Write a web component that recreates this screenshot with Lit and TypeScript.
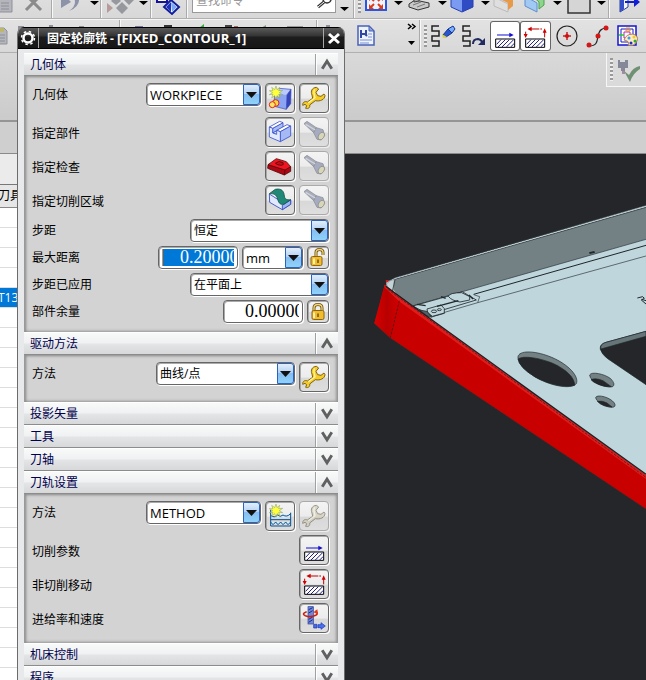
import { LitElement, html, svg, css, nothing, TemplateResult, SVGTemplateResult } from "lit";
import { customElement, state } from "lit/decorators.js";
import { classMap } from "lit/directives/class-map.js";

type Art = SVGTemplateResult;

/* ---------- artwork shared by dialog buttons (90-unit grid) ---------- */

const star = svg`<path d="M33 9l3 11 8-7-3 10 12-1-10 7 10 6-12-1 4 11-9-7-3 11-4-11-9 7 4-11-11 1 10-6-10-6 11 0-4-10 9 7z" fill="#ffff3c" stroke="#7d9a68" stroke-width="1.5"/>`;

const wrench = svg`<path d="M52 13C39 14 34 25 39 36L41 46 25 57C17 53 10 59 11 67L18 64 23 68 20 76C28 79 34 73 32 66L49 53C63 56 77 50 78 38L75 33 66 40 56 38 51 28 59 18Z" fill="#f8cc28" stroke="#7b6414" stroke-width="3"/><path d="M47 19C42 26 46 36 48 44L28 59" fill="none" stroke="#fff6a0" stroke-width="4"/>`;

const hatch = svg`<path d="M17 51H74V76H17Z" fill="#fff" stroke="#000" stroke-width="3"/><path d="M20 67L33 53M24 75L46 53M36 75L58 53M49 75L71 53M62 75L73 64" stroke="#20208c" stroke-width="3"/>`;
const cutting = svg`${hatch}<path d="M21 39H64" stroke="#1010d0" stroke-width="3"/><path d="M58 32L71 39 58 46Z" fill="#1010d0"/>`;
const nonCutting = svg`${hatch}<path d="M32 21H66M17 29V42M74 46V30" fill="none" stroke="#c00000" stroke-width="3" stroke-dasharray="26 3"/><path d="M35 14V28L22 21ZM11 36H23L17 48ZM68 32H80L74 19Z" fill="#d00000"/>`;

const art: Record<string, Art> = {
  newGeometry: svg`<path d="M28 31L43 16 78 19 66 35Z" fill="#b9cbff"/><path d="M28 31L66 35 64 79 28 70Z" fill="#8ba5f4"/><path d="M66 35L78 19 77 62 64 79Z" fill="#3345b9"/><path d="M28 31L43 16 78 19 77 62 64 79 28 70ZM66 35L64 79M66 35L78 19" fill="none" stroke="#3347bd" stroke-width="2"/><circle cx="32" cy="60" r="10" fill="#ffd83e" stroke="#e02020" stroke-width="3"/><circle cx="22" cy="65" r="9" fill="#ffe766" stroke="#e02020" stroke-width="3"/>${star}`,
  wrench,
  part: svg`<g stroke="#3b50cc" stroke-width="2.5" stroke-linejoin="round"><path d="M23 34L54 17V31L23 48Z" fill="#a9bdf5"/><path d="M23 48L54 31 66 35 35 52Z" fill="#dbe5ff"/><path d="M13 30L44 13 54 17 23 34Z" fill="#fff"/><path d="M35 40L66 23 77 27 46 44Z" fill="#fff"/><path d="M46 44L77 27V57L46 74Z" fill="#a5b9f4"/><path d="M13 30L23 34V48L35 52V40L46 44V74L13 60Z" fill="#e2eaff"/></g>`,
  check: svg`<g stroke="#520808" stroke-width="2.5" stroke-linejoin="round"><path d="M9 41L8 52 58 72 77 61V47L61 56Z" fill="#ae0713"/><path d="M9 41L34 23 64 32 77 47 60 57Z" fill="#f01422"/><path d="M60 57L58 72" /><path d="M31 37Q40 27 54 35Q58 42 49 43Q38 43 31 37Z" fill="#c90c18"/></g>`,
  area: svg`<g stroke="#3046bb" stroke-width="2.5" stroke-linejoin="round"><path d="M13 27L14 52 52 74 77 58V45L56 57 38 43Z" fill="#e0e9ff"/><path d="M52 61L77 45V58L52 74Z" fill="#a0b6f4"/></g><path d="M13 26L31 13C50 9 57 19 58 33C59 44 67 45 77 44L56 58C44 60 40 51 38 42C34 29 27 25 13 26Z" fill="#218777" stroke="#125949" stroke-width="2.5"/>`,
  torch: svg`<g stroke="#83868e" stroke-width="2"><path d="M15 20L24 13 52 32 44 47Z" fill="#a9adbb"/><path d="M44 47L52 32 72 38 77 55 66 69 54 67Z" fill="#a6abc0"/><ellipse cx="67" cy="57" rx="8" ry="12" transform="rotate(28 67 57)" fill="#d9d6b5"/><path d="M20 22L49 39" stroke="#d1d4dd" stroke-width="4"/></g>`,
  water: svg`<path d="M17 27V49Q23 45 29 49T41 49T53 49T65 49T77 49V35Q68 47 60 39Q51 49 44 42Q34 50 17 44Z" fill="#d4ecff"/><path d="M17 27V75H77V35M17 43Q28 52 38 42Q46 50 54 42Q65 50 77 38M17 56H77" fill="none" stroke="#07508c" stroke-width="3"/><path d="M17 63L24 71 32 63 39 71 47 63 54 71 62 63 69 71 77 63" fill="#d5efff" stroke="#07508c" stroke-width="3"/>${star}`,
  cutting,
  nonCutting,
  speed: svg`<rect x="27" y="11" width="16" height="52" fill="#7286d7" stroke="#273e9d" stroke-width="2"/><path d="M29 20L41 14M29 30L41 23M29 58L41 50M29 49L41 42" stroke="#182c82" stroke-width="3"/><path d="M49 25Q60 31 50 37Q35 44 19 38Q6 32 23 26" fill="none" stroke="#c8220f" stroke-width="5"/><path d="M43 28L55 19 57 34Z" fill="#e23a1b"/><path d="M44 64H54V75H44Z" fill="#4b6ae8" stroke="#1634b0" stroke-width="2"/><path d="M57 65H66V59L79 69 66 79V74H57Z" fill="#4a70ef" stroke="#1634b0" stroke-width="2"/>`,
};

const padlock = (open: boolean): Art => svg`
  <path d=${open ? "M9 11V5.500Q9 2.500 12.500 2.500T16 5.500V8" : "M7 11V7Q7 3.500 11 3.500T15 7V11"} fill="none" stroke="#6d541a" stroke-width="3"/>
  <path d=${open ? "M9 11V5.500Q9 2.500 12.500 2.500T16 5.500V8" : "M7 11V7Q7 3.500 11 3.500T15 7V11"} fill="none" stroke="#f5d674" stroke-width="1.300"/>
  <rect x=${open ? 4 : 5} y="9.500" width=${open ? 11 : 12} height="9" rx="1.500" fill="#f1bd2c" stroke="#8a6515"/>
  <path d="M7 11.500V17" stroke="#fff0a5" stroke-width="2"/><path d="M11 12.500V16" stroke="#6d541a" stroke-width="1.500"/>`;

/* ---------- toolbar data: each entry is its drawn width and its art ---------- */

interface Tool { w: number; label?: string; art?: Art; sep?: boolean; grip?: boolean; framed?: boolean; }

const drop: Art = svg`<path d="M2 1H11L6.500 5Z" fill="#000"/>`;

const topLeft: Tool[] = [
  { w: 21, label: "粘贴", art: svg`<path d="M-2-6H8L12-1V12H-2Z" fill="#b5b6bc" stroke="#8f9199"/><path d="M1 3H9M1 6H9M1 9H9" stroke="#8b8d98"/>` },
  { w: 30, label: "删除", art: svg`<path d="M6-4L20 10M19-4L5 10" stroke="#8b8b8b" stroke-width="3"/>` },
  { w: 2, sep: true },
  { w: 35, label: "撤消", art: svg`<path d="M8-4V8L18 2 15-1Q22-4 22 2Q22 7 16 11Q27 7 26-2L24-6Z" fill="#8d93a8"/>` },
  { w: 12, label: "撤消列表", art: drop },
  { w: 2, sep: true },
  { w: 35, label: "变换", art: svg`<path d="M5 3L11 8 5 13Z" fill="#b79a9a"/><path d="M20 2L26 8 20 14 14 8ZM14-4L19 1 14 5 9 1ZM27-5L32 0 27 5 22 0Z" fill="#96989e"/>` },
  { w: 13, label: "变换列表", art: drop },
  { w: 2, sep: true },
  { w: 34, label: "命令", art: svg`<path d="M5-3H15V2H5Z" fill="#fff" stroke="#13139b" stroke-width="2"/><path d="M12 7L19 0 27 7 20 14Z" fill="#fff" stroke="#111d99" stroke-width="2"/><path d="M19 2L25 7 20 12Z" fill="#7ba7f3"/><path d="M19 2V12L14 7Z" fill="#1c32bd"/>` },
  { w: 2, sep: true },
];

const topRight: Tool[] = [
  { w: 17, label: "查找列表", art: svg`<path d="M4 7H13L8.500 11Z" fill="#000"/>` },
  { w: 2, sep: true },
  { w: 9, grip: true },
  { w: 28, label: "适合窗口", art: svg`<path d="M2-4H22V10H2Z" fill="#eef4ff" stroke="#2e55e0" stroke-width="2"/><path d="M10 1L7-2M14 1L17-2M10 4L7 7M14 4L17 7" stroke="#e23a12" stroke-width="2"/><path d="M5 4V9H10ZM19 4V9H14ZM5 1V-3H10ZM19 1V-3H14Z" fill="#e23a12"/>` },
  { w: 13, label: "适合列表", art: drop },
  { w: 31, label: "渲染样式", art: svg`<path d="M4 4L10 0 24 3V7L13 10 4 7Z" fill="#c8c8c8" stroke="#333"/><path d="M8 5L16 2M12 7L20 4" stroke="#777"/><path d="M9-4H14V1L9 2Z" fill="#aaa" stroke="#444"/>` },
  { w: 12, label: "样式列表", art: drop },
  { w: 31, label: "视图方向", art: svg`<path d="M3-5L14-2V12L3 7Z" fill="#7b9bf3"/><path d="M14-2L25-6V7L14 12Z" fill="#2f4cc5"/><path d="M3-5V7L14 12 25 7V-6" fill="none" stroke="#2740ae"/>` },
  { w: 12, label: "方向列表", art: drop },
  { w: 31, label: "剖切", art: svg`<path d="M3-3L17 4V12L3 6Z" fill="#dfdfdf" stroke="#bbb"/><path d="M7-5H22V6L17 10V3L7-2Z" fill="#e79a4a"/>` },
  { w: 29, label: "编辑截面", art: svg`<path d="M3-4L15 3V12L3 6Z" fill="#a0c9f3" stroke="#5d8fcd"/><path d="M9-5H22V5L17 9V2Z" fill="#8ed48c" stroke="#4ba24e"/>` },
  { w: 13, label: "截面列表", art: drop },
  { w: 31, label: "背景", art: svg`<path d="M4-6H26V13H4Z" fill="#d5d5d5" stroke="#333" stroke-width="1.500"/>` },
  { w: 13, label: "背景列表", art: drop },
  { w: 2, sep: true },
  { w: 34, label: "退出", art: svg`<path d="M10-5V12L18 7V-5Z" fill="#f2f6ff" stroke="#273a9c"/><path d="M10-5L14-3V9L10 12Z" fill="#3450c4"/><path d="M15 2H26" stroke="#1020d0" stroke-width="2"/><path d="M24-3L30 2 24 7Z" fill="#1020d0"/>` },
];

const squiggle = svg`<path d="M9 6H2V11H9V16H2V21H9V26H2" fill="none" stroke="#222" stroke-width="1.500"/>`;

const secondRow: Tool[] = [
  { w: 41, label: "粘贴操作", art: svg`<path d="M-3 8H4L7 11V24H-3Z" fill="#b5b6bc" stroke="#8f9199"/><path d="M-3 8H4V12H-3Z" fill="#bdb66d"/><path d="M-1 15H5M-1 18H5M-1 21H5" stroke="#8b8d98"/><path d="M18 6H24V12H18Z" fill="#8d8f9a"/>` },
  { w: 78, label: "编辑", art: svg`<path d="M8 5H12V9H8ZM38 6H43V9H38Z" fill="#8d8f9a"/>` },
  { w: 2, sep: true },
  { w: 60, label: "生成刀轨", art: svg`<path d="M14 6H22V9H14Z" fill="#7a76a8"/><path d="M43 5H51V9H43Z" fill="#333"/>` },
  { w: 70, label: "确认刀轨", art: svg`<path d="M18 8L23 4V8Z" fill="#29b431"/><path d="M44 5H51V9H44Z" fill="#444"/><path d="M53 6H57V9H53Z" fill="#b16a50"/>` },
  { w: 65, label: "机床仿真", art: svg`<path d="M10 8L15 5V8Z" fill="#7c9a78"/><path d="M36 6H52V9H36Z" fill="#9a9a9a"/>` },
  { w: 2, sep: true },
  { w: 38, label: "后处理", art: svg`<path d="M8 5H12V9H8Z" fill="#8d8f9a"/>` },
  { w: 40, label: "车间文档", art: svg`<path d="M2 6H13L18 11V25H2Z" fill="#edf2ff" stroke="#4a61b5" stroke-width="1.500"/><path d="M13 6V11H18Z" fill="#8ba2e0" stroke="#4a61b5"/><path d="M5 10V18M5 14H10V10M9 14L11 16" fill="none" stroke="#3147a0" stroke-width="2"/><path d="M12 14H16M12 17H16M4 20H16M4 23H13" stroke="#7c8fcd"/>` },
  { w: 23, label: "更多", art: svg`<path d="M12 4L15 6.500 12 9M16 4L19 6.500 16 9" fill="none" stroke="#000" stroke-width="1.500"/><path d="M12 21H19L15.500 25Z" fill="#000"/>` },
  { w: 2, sep: true },
  { w: 9, grip: true },
  { w: 31, label: "显示刀轨", art: svg`${squiggle}<path d="M13 15L18 9 22 13 16 17Z" fill="#2956ce" stroke="#16338d"/><path d="M18 9L23 6 25 9 22 13Z" fill="#77b0ff" stroke="#16338d"/><path d="M12 14L17 17 13 18Z" fill="#d4d13e"/>` },
  { w: 29, label: "重播刀轨", art: svg`${squiggle}<path d="M12 24Q12 19 17 19Q21 20 22 24" fill="none" stroke="#202b60" stroke-width="2"/><path d="M17 25H24V18Z" fill="#202b60"/>` },
  { w: 30, label: "切削参数", framed: true, art: svg`<g transform="translate(0 1) scale(.3333)">${cutting}</g>` },
  { w: 31, label: "非切削移动", framed: true, art: svg`<g transform="translate(0 1) scale(.3333)">${nonCutting}</g>` },
  { w: 33, label: "点", art: svg`<circle cx="16" cy="16" r="10" fill="none" stroke="#222" stroke-width="1.200"/><path d="M12 16H20M16 12V20" stroke="#c02020" stroke-width="1.500"/><circle cx="16" cy="16" r="2" fill="#d01010"/>` },
  { w: 30, label: "曲线", art: svg`<path d="M5 26C14 26 13 20 14 16S16 8 23 8" fill="none" stroke="#222" stroke-width="1.200"/><circle cx="5" cy="25" r="2.500" fill="#d01818"/><circle cx="14" cy="16" r="2.500" fill="#d01818"/><circle cx="22" cy="8" r="2.500" fill="#d01818"/>` },
  { w: 32, label: "颜色", art: svg`<path d="M4 6H22V25H4Z" fill="#fff" stroke="#1616d0" stroke-width="1.500"/><path d="M7 9H19V22H7Z" fill="none" stroke="#1616d0"/><path d="M10 12H16V18H10Z" fill="none" stroke="#c020c0"/><path d="M12 8H16V11H12Z" fill="none" stroke="#e88b24"/><path d="M5 15H10" stroke="#21d121" stroke-width="1.500"/><path d="M10 20Q12 14 19 14Q25 16 23 21Q20 27 14 25Q16 21 10 20Z" fill="#ffe9c8" stroke="#aa8050"/><circle cx="15" cy="18" r="1.500" fill="#2aa7ef"/><circle cx="20" cy="17" r="1.500" fill="#f3c821"/><circle cx="21" cy="21" r="1.500" fill="#27b32c"/><circle cx="17" cy="23" r="1.500" fill="#1831c8"/>` },
];

/* ---------- dialog data ---------- */

interface Row {
  label: string;
  dense?: boolean;
  top?: boolean;
  select?: { value: string; size: "wide" | "medium" | "small"; latin?: boolean };
  number?: { value: string; selected?: boolean };
  lock?: "open" | "closed";
  icons?: { art: string; label: string; off?: boolean }[];
}
interface Group { title: string; tall?: boolean; rows: Row[]; }

const groups: Group[] = [
  {
    title: "几何体", tall: true, rows: [
      { label: "几何体", top: true, select: { value: "WORKPIECE", size: "medium", latin: true }, icons: [{ art: "newGeometry", label: "新建几何体" }, { art: "wrench", label: "编辑几何体" }] },
      { label: "指定部件", icons: [{ art: "part", label: "选择部件" }, { art: "torch", label: "显示部件", off: true }] },
      { label: "指定检查", icons: [{ art: "check", label: "选择检查" }, { art: "torch", label: "显示检查", off: true }] },
      { label: "指定切削区域", icons: [{ art: "area", label: "选择切削区域" }, { art: "torch", label: "显示切削区域", off: true }] },
      { label: "步距", dense: true, select: { value: "恒定", size: "wide" } },
      { label: "最大距离", dense: true, number: { value: "0.20000", selected: true }, select: { value: "mm", size: "small", latin: true }, lock: "open" },
      { label: "步距已应用", dense: true, select: { value: "在平面上", size: "wide" } },
      { label: "部件余量", dense: true, number: { value: "0.00000" }, lock: "closed" },
    ],
  },
  { title: "驱动方法", rows: [{ label: "方法", top: true, select: { value: "曲线/点", size: "wide" }, icons: [{ art: "wrench", label: "编辑驱动方法" }] }] },
  { title: "投影矢量", rows: [] },
  { title: "工具", rows: [] },
  { title: "刀轴", rows: [] },
  {
    title: "刀轨设置", rows: [
      { label: "方法", top: true, select: { value: "METHOD", size: "medium", latin: true }, icons: [{ art: "water", label: "新建方法" }, { art: "wrench", label: "编辑方法", off: true }] },
      { label: "切削参数", icons: [{ art: "cutting", label: "切削参数" }] },
      { label: "非切削移动", icons: [{ art: "nonCutting", label: "非切削移动" }] },
      { label: "进给率和速度", icons: [{ art: "speed", label: "进给率和速度" }] },
    ],
  },
  { title: "机床控制", rows: [] },
  { title: "程序", rows: [] },
];

@customElement("operation-dialog")
export class OperationDialog extends LitElement {
  static styles = css`
    :host { display: block; color: #000; font: 12px/16px "Open Sans", "Noto Sans CJK SC", sans-serif; }
    * { box-sizing: border-box; }
    button, select, input { font: inherit; color: inherit; margin: 0; padding: 0; }
    svg { display: block; }
    .window { border: 1px solid #6c6c6c; border-top: 0; border-radius: 7px 7px 0 0; background: #e8e9eb; overflow: hidden; }
    .title { display: flex; height: 22px; border-top: 1px solid #000; border-bottom: 1px solid #000; background: linear-gradient(#5a5a5a, #333 40%, #1d1d1d 45%, #161616); color: #fff; }
    .title h1 { flex: 1; margin: 0; padding-left: 8px; font-size: 12px; line-height: 20px; font-weight: 700; border: solid #a8a8a8; border-width: 0 1px; white-space: nowrap; }
    .title button { width: 20px; border: 0; background: none; display: grid; place-items: center; }
    .body { padding: 4px 6px; }
    .head { display: flex; width: 100%; height: 23px; border: 0; border-top: 1px solid #fff; border-bottom: 1px solid #8c8c8c; background: linear-gradient(#f8f9f9, #f0f1f2 48%, #e3e5e7 52%, #d6d8da); color: #00004e; text-align: left; }
    .head span { flex: 1; padding-left: 6px; line-height: 21px; }
    .head svg { border-left: 1px solid #a0a0a0; box-shadow: inset 1px 0 #fff; }
    .rows { padding: 7px 8px 6px 7px; background: #d3d3d3; border: solid #999; border-width: 0 1px; box-shadow: inset 1px 1px 3px #888, inset -1px -1px 3px #999; }
    .rows.tall { padding-bottom: 5px; }
    .row { display: flex; gap: 4px; height: 34px; align-items: flex-start; }
    .row.dense { height: 27px; }
    .row label, .row .name { flex: 1; line-height: 34px; white-space: nowrap; }
    .row.dense label, .row.top label { line-height: 23px; }
    .combo { display: grid; height: 23px; }
    .combo > * { grid-area: 1 / 1; }
    .combo svg { justify-self: end; margin: 1px; pointer-events: none; }
    .wide { width: 139px; }
    .medium { width: 115px; }
    .small { width: 61px; }
    select, input { width: 100%; height: 23px; border: 1px solid #666; border-radius: 4px; background: #fff; box-shadow: inset 1px 1px #aaa, 1px 1px #fff; outline: 0; appearance: none; }
    select { padding: 0 20px 0 3px; }
    .latin { font-size: 13px; }
    input { width: 80px; padding: 2px 3px; text-indent: 18px; font: 18px/18px "Liberation Serif", serif; }
    input.selected { color: #fff; background: linear-gradient(90deg, #e08a3c 1px, #0078d7 1px) content-box, #fff; }
    .icon { flex: none; width: 30px; height: 30px; border: 1px solid #666; border-radius: 4px; background: linear-gradient(#f4f4f4, #ececec 50%, #d8d8d8 55%, #dedede); box-shadow: inset 1px 1px #aaa, 1px 1px #fff; }
    .icon:disabled { border-color: #aaa; box-shadow: 1px 1px #eee; }
    .icon.lock { width: 22px; height: 23px; }
    .faded { filter: grayscale(.85); opacity: .65; }
  `;

  @state() private open = new Set(groups.filter((g) => g.rows.length).map((g) => g.title));

  private toggle(title: string) {
    const next = new Set(this.open);
    next.has(title) ? next.delete(title) : next.add(title);
    this.open = next;
  }

  private row(row: Row, id: string): TemplateResult {
    const { select, number, lock, icons = [] } = row;
    const name = number || select ? html`<label for=${id}>${row.label}</label>` : html`<span class="name">${row.label}</span>`;
    return html`<div class=${classMap({ row: true, dense: !!row.dense, top: !!row.top })}>
      ${name}
      ${number ? html`<input id=${id} class=${number.selected ? "selected" : ""} .value=${number.value}>` : nothing}
      ${select ? html`<span class="combo ${select.size}">
        <select id=${number ? id + "-unit" : id} class=${select.latin ? "latin" : ""} aria-label=${row.label}><option>${select.value}</option></select>
        <svg width="17" height="21" viewBox="0 0 17 21" aria-hidden="true">
          <defs><linearGradient id="blue" x2="0" y2="1"><stop stop-color="#e6f0fb"/><stop offset=".45" stop-color="#b4d3f4"/><stop offset=".5" stop-color="#88bdf0"/><stop offset="1" stop-color="#8ed4fb"/></linearGradient></defs>
          <path d="M.5.500H14Q16.500.500 16.500 3V18Q16.500 20.500 14 20.500H.500Z" fill="url(#blue)" stroke="#2a62bd"/>
          <path d="M3 8H14L8.500 14Z" fill="#111"/>
        </svg></span>` : nothing}
      ${lock ? html`<button class="icon lock" aria-label="锁定"><svg width="20" height="21" viewBox="1 0 20 21">${padlock(lock === "open")}</svg></button>` : nothing}
      ${icons.map((i) => html`<button class="icon" aria-label=${i.label} ?disabled=${i.off}>
        <svg class=${i.off && i.art === "wrench" ? "faded" : ""} width="28" height="28" viewBox="3 3 84 84">${art[i.art]}</svg></button>`)}
    </div>`;
  }

  render() {
    return html`<section class="window" role="dialog" aria-labelledby="caption">
      <header class="title">
        <button aria-label="选项"><svg width="16" height="16" viewBox="0 0 16 16"><circle cx="8" cy="8" r="4.500" fill="none" stroke="#fff" stroke-width="2.500"/><circle cx="8" cy="8" r="6.500" fill="none" stroke="#fff" stroke-width="1.500" stroke-dasharray="2.500 2.600"/></svg></button>
        <h1 id="caption">固定轮廓铣 - <span class="latin">[FIXED_CONTOUR_1]</span></h1>
        <button aria-label="关闭"><svg width="14" height="14" viewBox="0 0 14 14"><path d="M2 3L12 12M12 3L2 12" stroke="#fff" stroke-width="3"/></svg></button>
      </header>
      <div class="body">
        ${groups.map((g, n) => {
          const open = this.open.has(g.title);
          return html`<button class="head" aria-expanded=${open} @click=${() => this.toggle(g.title)}>
              <span>${g.title}</span>
              <svg width="23" height="21" viewBox="0 0 23 21"><path d=${open ? "M6.500 15L11.500 7 16.500 15" : "M6.500 6L11.500 14 16.500 6"} fill="none" stroke="#606060" stroke-width="3"/></svg>
            </button>
            ${open && g.rows.length ? html`<div class=${classMap({ rows: true, tall: !!g.tall })}>${g.rows.map((r, i) => this.row(r, `field-${n}-${i}`))}</div>` : nothing}`;
        })}
      </div>
    </section>`;
  }
}

@customElement("model-view")
export class ModelView extends LitElement {
  static styles = css`
    :host { display: block; background: #25262a; overflow: hidden; }
    svg { display: block; width: 100%; height: 100%; }
  `;
  render() {
    return html`<svg viewBox="0 0 301 526" preserveAspectRatio="xMinYMin slice" role="img" aria-label="工件模型">
      <defs>
        <linearGradient id="corner"><stop stop-color="#d80000"/><stop offset=".5" stop-color="#b80000"/><stop offset="1" stop-color="#d40000"/></linearGradient>
      </defs>
      <g transform="translate(0 26) scale(.33333)" stroke-linejoin="round">
        <path d="M124 306L150 295 903 78V890L262 424 124 322Z" fill="#bfd6dc"/>
        <path d="M148 298L903 82V178L205 377 166 356 146 330Z" fill="#738184"/>
        <path d="M148 298L903 82" fill="none" stroke="#222" stroke-width="2"/>
        <path d="M125 309L150 295 903 78" fill="none" stroke="#c8dde2" stroke-width="3"/>
        <path d="M125 306L150 293 903 76" fill="none" stroke="#39474b" stroke-width="2" stroke-dasharray="8 3"/>
        <path d="M124 312Q134 300 148 298L144 334 128 321Z" fill="#c2d4d8" stroke="#333"/>
        <path d="M150 300L142 334" stroke="#222" stroke-width="2"/>
        <path d="M205 377L903 178" stroke="#29343a" stroke-width="2"/>
        <path d="M386 343L903 196" stroke="#1c2427" stroke-width="3"/>
        <path d="M258 409L398 368 404 350 386 344M398 368L903 228" fill="none" stroke="#27343a" stroke-width="2"/>
        <path d="M732 217L748 213 750 218 734 222Z" fill="#20282b"/>
        <g fill="#bfd6dc" stroke="#20282b" stroke-width="2.500">
          <path d="M204 378L286 355 304 350 352 335 380 352 394 360 290 391 298 400 262 410Z"/>
          <path d="M310 349Q313 338 350 338L374 350V360L345 366Q320 362 310 349Z"/>
          <path d="M246 387L288 375 298 386V399L262 409 248 397Z"/>
          <path d="M216 373L242 377M276 379L340 362M288 350L302 355M372 345L384 357" fill="none" stroke-width="4"/>
          <ellipse cx="267" cy="394" rx="8" ry="4"/><ellipse cx="283" cy="389" rx="6" ry="3"/>
        </g>
        <path d="M224 390L246 394 260 412 246 408Z" fill="#526065" stroke="#222" stroke-width="2"/>
        <path d="M119 314L164 358 903 887V987L136 474 88 430Z" fill="#c90000"/>
        <path d="M119 314L164 358 136 474 88 430Z" fill="url(#corner)"/>
        <path d="M122 301L132 300 130 304 123 308Z" fill="#e01c1c"/>
        <path d="M119 314L200 376 903 884V897L164 365 118 322Z" fill="#e01c1c"/>
        <path d="M122 319L200 376 903 883" fill="none" stroke="#1b1f21" stroke-width="4"/>
        <path d="M128 328L903 892M163 362L136 474" fill="none" stroke="#222" stroke-width="2" stroke-dasharray="8 4"/>
        <path d="M88 430L136 474 903 987" fill="none" stroke="#5a2626" stroke-width="2" stroke-dasharray="6 4"/>
        <g stroke="#20282b" stroke-width="2">
          <path d="M519 535C515 510 568 510 620 532S703 590 694 611C677 630 614 617 569 590Q522 561 519 535Z" fill="#738184"/>
          <path d="M519 537C535 526 580 533 621 549C662 567 689 592 689 616C660 624 610 613 569 590Q523 562 519 537Z" fill="#242629"/>
          <path d="M734 585C739 574 777 581 797 596Q813 613 803 620C782 624 735 607 734 585Z" fill="#738184"/>
          <path d="M738 599Q752 593 774 602L799 620C780 623 748 611 738 599Z" fill="#242629"/>
          <path d="M752 652C758 642 796 652 808 669Q815 681 801 682C781 681 752 665 752 652Z" fill="#738184"/>
          <path d="M757 664Q771 661 786 669L801 681Q773 681 757 664Z" fill="#242629"/>
          <path d="M903 454L783 487Q763 493 766 508Q771 524 788 536L903 614Z" fill="#242629"/>
          <path d="M903 454L783 487Q763 493 768 507L903 469Z" fill="#66757a"/>
        </g>
        <path d="M877 354L893 350 898 355 889 360 903 372M890 358L903 362" fill="none" stroke="#20282b" stroke-width="3"/>
      </g>
    </svg>`;
  }
}

@customElement("app-root")
export class AppRoot extends LitElement {
  static styles = css`
    :host { display: flex; flex-direction: column; position: relative; height: 100vh; overflow: hidden; background: #d0d0d0; font: 12px/16px "Open Sans", "Noto Sans CJK SC", sans-serif; }
    * { box-sizing: border-box; }
    svg { display: block; overflow: hidden; }
    .bar { display: flex; flex: none; overflow: hidden; background: linear-gradient(#e2e2e2, #d8d8d8); border-bottom: 1px solid #b0b0b0; }
    .upper { height: 33px; margin-top: -14px; align-items: flex-end; }
    .lower { height: 34px; border-top: 1px solid #f6f6f6; }
    .tool { flex: none; padding: 0; border: 0; background: none; }
    .framed { background: #fff; border-radius: 3px; box-shadow: inset 0 0 0 1px #666; height: 30px; margin-top: 1px; overflow: hidden; }
    .sep { flex: none; width: 2px; height: 100%; border-left: 1px solid #aaa; border-right: 1px solid #f8f8f8; }
    .grip { flex: none; align-self: stretch; margin: 5px 3px 5px 3px; width: 3px; background: repeating-linear-gradient(#999 0 2px, #eee 2px 4px); }
    .search { display: flex; flex: none; align-items: center; width: 144px; height: 22px; margin: 0 0 5px 4px; border: 1px solid #999; background: #fff; }
    .search input { flex: 1; min-width: 0; border: 0; padding: 0 0 2px 3px; font: inherit; outline: 0; background: none; }
    .search input::placeholder { color: #999; opacity: 1; }
    .dock { flex: none; display: flex; justify-content: flex-end; align-items: flex-start; height: 69px; background: linear-gradient(#d9d9d9, #cbcbcb); border-bottom: 2px solid #959595; }
    .plate { display: flex; width: 40px; height: 34px; border-left: 1px solid #f6f6f6; border-bottom: 1px solid #f6f6f6; background: #dadada; }
    .gap { flex: none; height: 32px; background: #cfcfcf; border-bottom: 1px solid #8a8a8a; }
    .work { flex: 1; min-height: 0; display: grid; grid-template-columns: 345px 1fr; }
    .nav { overflow: hidden; background: #fff; }
    .nav table { width: 100%; border-collapse: collapse; border-spacing: 0; table-layout: fixed; }
    .nav caption { height: 30px; background: #ebebeb; }
    .nav th { height: 23px; padding: 0; border-top: 1px solid #777; border-bottom: 1px solid #888; background: #e6e6e6; font-weight: 400; font-size: 12px; text-align: left; text-indent: -2px; }
    .nav td { height: 20px; padding: 0; border-bottom: 1px solid #ddd; line-height: 18px; text-indent: -2px; }
    .nav .current td { background: #0078d7; color: #fff; }
    operation-dialog { position: absolute; left: 17px; top: 27px; width: 328px; }
  `;

  private tools(list: Tool[], height: number) {
    return list.map((t) => t.sep ? html`<span class="sep"></span>` : t.grip ? html`<span class="grip"></span>` :
      html`<button class=${classMap({ tool: true, framed: !!t.framed })} aria-label=${t.label ?? ""}><svg width=${t.w} height=${height} viewBox="0 0 ${t.w} ${height}">${t.art}</svg></button>`);
  }

  render() {
    return html`
      <nav class="bar upper" aria-label="标准">
        ${this.tools(topLeft, 18)}
        <label class="search"><input placeholder="查找命令" aria-label="查找命令">
          <svg width="20" height="18" viewBox="0 0 20 18"><circle cx="12" cy="6" r="4" fill="none" stroke="#333" stroke-width="1.500"/><path d="M9 9L3 14" stroke="#333" stroke-width="3"/><path d="M9 9L3 14" stroke="#fff"/></svg>
        </label>
        ${this.tools(topRight, 18)}
      </nav>
      <nav class="bar lower" aria-label="操作">${this.tools(secondRow, 32)}</nav>
      <div class="dock"><div class="plate"><span class="grip"></span>
        <button class="tool" aria-label="检查"><svg width="28" height="32" viewBox="0 0 28 32"><path d="M2 6H4V8H9V6H12V14H9V17H5V14H2Z" fill="#858899"/><path d="M6 17H9V20H6Z" fill="#a88aa0"/><path d="M8 17L13 21Q17 13 24 12V15Q17 19 14 28Z" fill="#719174"/></svg></button>
      </div></div>
      <div class="gap"></div>
      <main class="work">
        <div class="nav"><table>
          <caption></caption>
          <thead><tr><th scope="col">刀具</th></tr></thead>
          <tbody>${Array.from({ length: 24 }, (_, i) => html`<tr class=${i === 4 ? "current" : ""}><td>${i === 4 ? "T13" : ""}</td></tr>`)}</tbody>
        </table></div>
        <model-view></model-view>
      </main>
      <operation-dialog></operation-dialog>`;
  }
}
